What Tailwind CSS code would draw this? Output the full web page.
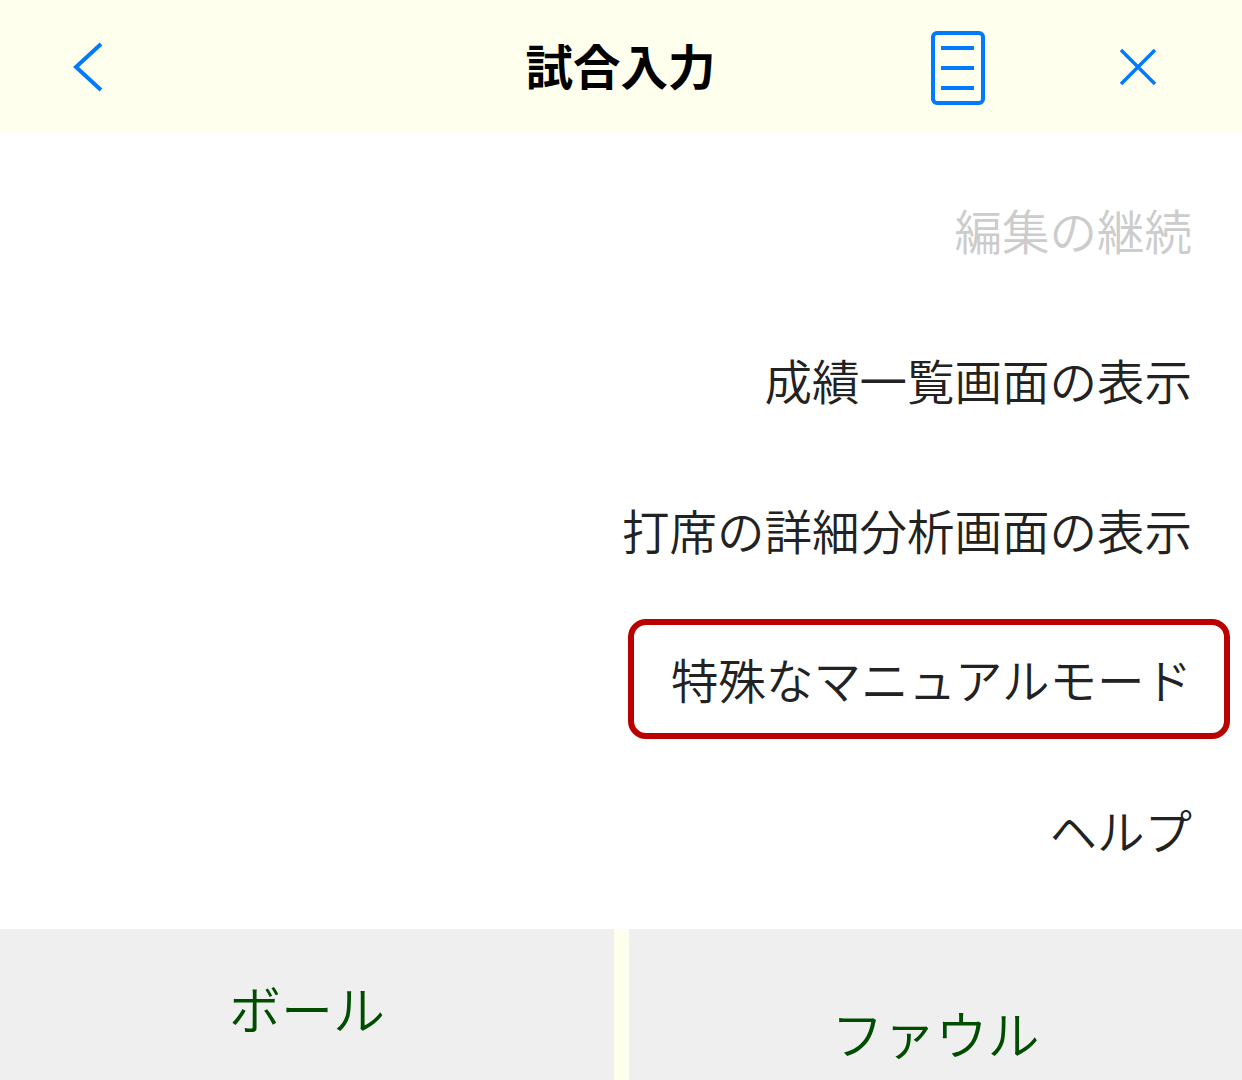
<!DOCTYPE html>
<html lang="ja">
<head>
    <meta charset="UTF-8">
    <title>試合入力</title>
    <script src="https://cdn.jsdelivr.net/npm/@tailwindcss/browser@4"></script>
</head>
<body class="bg-white font-['Noto_Sans_CJK_JP',sans-serif]">
    <div class="w-[1242px] h-[1080px] overflow-hidden flex flex-col">

        <!-- Header -->
        <header class="h-[133px] bg-[#ffffee] flex items-center">
            <div class="w-[310px] pl-[72px]">
                <svg width="32" height="52" viewBox="0 0 32 52" fill="none" stroke="#007aff" stroke-width="4">
                    <path d="M29 3 L4 26 L29 49" />
                </svg>
            </div>
            <h1 class="w-[621px] text-[47.5px] font-bold text-black text-center pb-[4px]">試合入力</h1>
            <svg class="mt-[2px]" width="54" height="74" viewBox="0 0 54 74" fill="none" stroke="#007aff">
                <rect x="2" y="2" width="50" height="70" rx="4" stroke-width="4" />
                <path d="M10 17 H43 M10 37 H43 M10 57 H43" stroke-width="4" />
            </svg>
            <svg class="ml-[133px]" width="40" height="40" viewBox="0 0 40 40" fill="none" stroke="#007aff" stroke-width="3.5">
                <path d="M3 3 L37 37 M37 3 L3 37" />
            </svg>
        </header>

        <!-- Menu -->
        <main class="flex-1 flex flex-col pt-[21px] text-[47.5px] font-[350] text-[#222222]">
            <div class="h-[150px] flex items-center justify-end pr-[50px] pt-[1px] text-[#cccccc]">編集の継続</div>
            <div class="h-[150px] flex items-center justify-end pr-[50px] pt-[1px]">成績一覧画面の表示</div>
            <div class="h-[150px] flex items-center justify-end pr-[50px] pt-[1px]">打席の詳細分析画面の表示</div>
            <div class="h-[150px] flex items-center justify-end pr-[12px]">
                <div class="w-[602px] h-[120px] flex items-center justify-end pr-[32px] border-[6px] border-[#bb0000] rounded-[18px]">特殊なマニュアルモード</div>
            </div>
            <div class="h-[150px] flex items-center justify-end pr-[50px] pt-[1px]">ヘルプ</div>
        </main>

        <!-- Bottom buttons -->
        <footer class="h-[151px] bg-[#ffffee] grid grid-cols-[614px_1fr] gap-x-[15px] text-[52px] font-[350] text-[#004d00]">
            <div class="bg-[#efefef] flex justify-center pt-[40px]">ボール</div>
            <div class="bg-[#efefef] flex justify-center pt-[65px]">ファウル</div>
        </footer>
    </div>
</body>
</html>
